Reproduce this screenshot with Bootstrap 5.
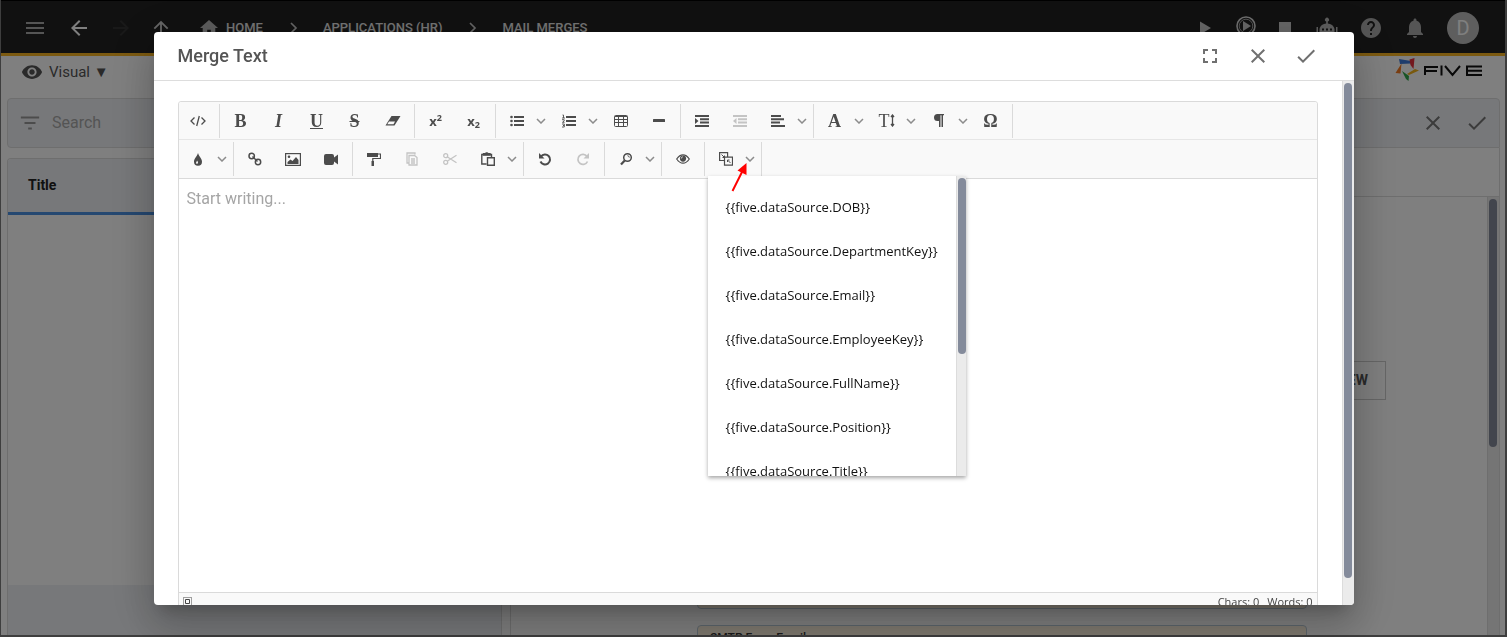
<!DOCTYPE html>
<html lang="en">
<head>
<meta charset="utf-8">
<meta name="viewport" content="width=device-width, initial-scale=1">
<title>Merge Text</title>
<link href="https://cdn.jsdelivr.net/npm/bootstrap@5.3.0/dist/css/bootstrap.min.css" rel="stylesheet">
<style>
  body { font-family: Roboto, "Liberation Sans", sans-serif; background: #808080; overflow: hidden; }
  svg { display: block; flex: none; }
  .plain-btn { background: none; border: 0; padding: 0; color: inherit; display: flex; align-items: center; justify-content: center; }

  /* application behind the dialog */
  .app-frame { height: 100vh; background: #fff; border: solid #7c7c7c; border-width: 0 2px 2px 1px; overflow: hidden; }
  .top-nav { height: 56px; flex: none; background: #222; border-top: 1px solid #000; border-bottom: 3px solid #f8b422; color: #fff; padding: 2px 26px 0 12px; }
  .top-nav .plain-btn { width: 44px; height: 44px; }
  .top-nav .plain-btn.tight { width: 40px; }
  .top-nav .dim { color: #aaa; }
  .top-nav .off { color: #333; }
  .crumbs { font-size: 13px; font-weight: 500; margin-left: 19px; }
  .crumbs a { color: #e8e8e8; text-decoration: none; }
  .crumbs svg { margin: 0 24px; }
  .avatar { width: 32px; height: 32px; border-radius: 50%; background: #bdbdbd; font-size: 20px; line-height: 32px; margin-left: 10px; }
  .view-bar { height: 42px; flex: none; padding: 0 21px 0 20px; color: #555; font-size: 15px; }
  .view-bar .plain-btn { height: 32px; gap: 6px; }
  .work-area { padding: 0 5px 0 6px; gap: 8px; }
  .list-side { width: 495px; }
  .soft { background: #eff1f5; }
  .lined { border: 1px solid #dcdcdc; }
  .search-box { height: 50px; flex: none; border-radius: 4px; padding: 0 11px; gap: 9px; color: #999; }
  .search-box input { border: 0; background: none; color: #999; font-size: 16px; width: 100%; }
  .search-box input::placeholder { color: #a9a9a9; }
  .records { margin-top: 10px; border-radius: 4px 4px 0 0; border-bottom: 0; }
  .records-head { height: 56px; border-bottom: 3px solid #4a90e2; padding: 0 20px; font-size: 14px; font-weight: 700; color: #222; }
  .records-foot { height: 50px; }
  .form-head { height: 50px; flex: none; border-radius: 4px 4px 0 0; color: #777; }
  .form-head .plain-btn { width: 44px; height: 44px; }
  .form-tabs { height: 49px; flex: none; border-top: 0; }
  .form-scroll { border: solid #dcdcdc; border-width: 0 1px; }
  .form-fields { padding: 164px 0 0 6px; overflow: hidden; }
  .preview-btn { height: 39px; flex: none; border: 1px solid #ccc; border-radius: 0; background: none; font-size: 14px; font-weight: 700; color: #555; padding: 0 17px; margin-right: 101px; }
  .form-field { width: 610px; max-width: 90%; margin: 0 auto 16px; border: 1px solid #b9cbd9; border-radius: 4px; background: #fff3e0; padding: 3px 12px; font-size: 12px; font-weight: 500; color: #333; flex: none; }
  .field-tall { height: 209px; }
  .field-short { height: 60px; }

  .scroll-track { width: 12px; flex: none; background: #ebebeb; border-left: 1px solid #dcdcdc; padding: 2px 1px; }
  .scroll-thumb { width: 8px; border-radius: 4px; background: #848b9b; }
  .thumb-page { height: 248px; }
  .thumb-dialog { height: calc(100vh - 142px); }
  .thumb-menu { height: 176px; }

  /* dialog */
  .merge-modal { --bs-modal-margin: 32px; --bs-modal-width: 1200px; --bs-modal-border-width: 0; --bs-modal-border-radius: 4px; --bs-modal-inner-border-radius: 4px; }
  .merge-modal .modal-content { height: 100%; box-shadow: 0 11px 15px -7px rgba(0,0,0,.2), 0 24px 38px 3px rgba(0,0,0,.14), 0 9px 46px 8px rgba(0,0,0,.12); }
  .merge-modal .modal-header { height: 49px; padding: 0 24px; border-bottom: 1px solid #ddd; color: #707070; }
  .merge-modal .modal-title { font-size: 18px; font-weight: 500; color: #555; line-height: 24px; }
  .merge-modal .modal-header .plain-btn { width: 48px; height: 48px; }
  .merge-modal .modal-body { padding: 0; overflow: hidden; }
  .editor-wrap { padding: 20px 24px 0; }

  .editor { border: 1px solid #dadada; border-radius: 3px 3px 0 0; }
  .editor-tools { background: #f9f9f9; border-bottom: 1px solid #dadada; border-radius: 3px 3px 0 0; color: #4c4c4c; }
  .tool-row { height: 38px; }
  .tool-row:first-child { border-bottom: 1px solid #e6e6e6; }
  .tool-group { height: 34px; padding: 0 2px; border-right: 1px solid #dadada; }
  .tool-group:first-child { padding-left: 0; }
  .tool-group .plain-btn { width: 38px; height: 34px; }
  .tool-group .plain-btn.more { width: 14px; padding-right: 4px; color: #8c8c8c; }
  .tool-group .plain-btn:disabled { opacity: .3; }
  .serif { font: bold 18px/20px "Liberation Serif", serif; }
  .script { font: bold 13px/16px "Open Sans", sans-serif; }
  .script sup, .script sub { font-size: 9px; }
  .editor-text { display: block; width: 100%; border: 0; resize: none; padding: 8px; font-size: 16px; line-height: 24px; height: calc(100vh - 224px); outline: 0; }
  .editor-text::placeholder { color: #a5a5a5; }
  .editor-status { height: 25px; background: #f9f9f9; border-top: 1px solid #dadada; padding: 0 4px; gap: 8px; font: 11px/18px "Open Sans", sans-serif; color: #444; }

  .field-menu { position: absolute; left: 3px; top: 34px; width: 258px; height: 300px; background: #fff; z-index: 5; box-shadow: 0 2px 4px rgba(0,0,0,.35); overflow: hidden; }
  .field-menu ul { padding-top: 9px; }
  .field-menu a { display: block; padding: 0 18px; font: 13px/44px "Open Sans", sans-serif; color: #111; text-decoration: none; white-space: nowrap; }
  .pointer { position: absolute; left: 26px; top: 21px; z-index: 6; }
</style>
</head>
<body>
<svg width="0" height="0" class="position-absolute" aria-hidden="true">
  <symbol id="chev" viewBox="0 0 10 6"><path d="M1 1l4 4 4-4" fill="none" stroke="currentColor" stroke-width="1.5"/></symbol>
  <symbol id="x" viewBox="0 0 24 24"><path d="M19 6.41L17.59 5 12 10.59 6.41 5 5 6.41 10.59 12 5 17.59 6.41 19 12 13.41 17.59 19 19 17.59 13.41 12z" fill="currentColor"/></symbol>
  <symbol id="check" viewBox="0 0 24 24"><path d="M9 16.17L4.83 12l-1.42 1.41L9 19 21 7l-1.41-1.41z" fill="currentColor"/></symbol>
  <symbol id="eye" viewBox="0 0 24 24"><path d="M12 4.5C7 4.5 2.73 7.61 1 12c1.73 4.39 6 7.5 11 7.5s9.27-3.11 11-7.5c-1.73-4.39-6-7.5-11-7.5zM12 17c-2.76 0-5-2.24-5-5s2.24-5 5-5 5 2.24 5 5-2.24 5-5 5zm0-8c-1.66 0-3 1.34-3 3s1.34 3 3 3 3-1.34 3-3-1.34-3-3-3z" fill="currentColor"/></symbol>
</svg>

<div class="app-frame d-flex flex-column">
  <header class="top-nav d-flex align-items-center">
    <button class="plain-btn dim" aria-label="Menu"><svg width="24" height="24" viewBox="0 0 24 24" fill="currentColor"><path d="M3 18h18v-2H3v2zm0-5h18v-2H3v2zm0-7v2h18V6H3z"/></svg></button>
    <button class="plain-btn" aria-label="Back"><svg width="24" height="24" viewBox="0 0 24 24" fill="currentColor"><path d="M20 11H7.83l5.59-5.59L12 4l-8 8 8 8 1.41-1.41L7.83 13H20v-2z"/></svg></button>
    <button class="plain-btn tight off" aria-label="Forward"><svg width="24" height="24" viewBox="0 0 24 24" fill="currentColor"><path d="M12 4l-1.41 1.41L16.17 11H4v2h12.17l-5.58 5.59L12 20l8-8z"/></svg></button>
    <button class="plain-btn tight" aria-label="Up"><svg width="22" height="22" viewBox="0 0 24 24" fill="#ccc"><path d="M4 12l1.41 1.41L11 7.83V20h2V7.83l5.58 5.59L20 12l-8-8-8 8z"/></svg></button>
    <nav class="crumbs d-flex align-items-center" aria-label="Breadcrumb">
      <a href="#" class="d-flex align-items-center"><svg class="m-0 me-2" width="18" height="20" viewBox="2 2 20 20" fill="#bbb"><path d="M10 20v-6h4v6h5v-8h3L12 3 2 12h3v8z"/></svg>HOME</a>
      <svg width="12" height="12" viewBox="0 0 12 12"><path d="M4 1l5 5-5 5" fill="none" stroke="#ccc" stroke-width="1.7"/></svg>
      <a href="#">APPLICATIONS (HR)</a>
      <svg width="12" height="12" viewBox="0 0 12 12"><path d="M4 1l5 5-5 5" fill="none" stroke="#ccc" stroke-width="1.7"/></svg>
      <a href="#">MAIL MERGES</a>
    </nav>
    <div class="ms-auto d-flex align-items-center">
      <button class="plain-btn tight" aria-label="Run"><svg width="24" height="24" viewBox="0 0 24 24" fill="#ccc"><path d="M7 5.500v13l11-6.500z"/></svg></button>
      <button class="plain-btn tight" aria-label="Preview"><svg width="24" height="28" viewBox="0 0 24 28"><circle cx="13" cy="12" r="9" fill="none" stroke="#ddd" stroke-width="1.600"/><circle cx="13" cy="12" r="6.800" fill="none" stroke="#aaa"/><path d="M10 7v10l8-5z" fill="#ccc"/></svg></button>
      <button class="plain-btn tight" aria-label="Stop"><svg width="24" height="24" viewBox="0 0 24 24"><path d="M6 6h12v12H6z" fill="#ccc"/></svg></button>
      <button class="plain-btn" aria-label="Assistant"><svg width="24" height="24" viewBox="0 0 24 24"><path d="M11.200 5.500a2 2 0 1 1 1.600 0V7.500c3 .3 6 2 6.700 5.500v7h-15v-7c.7-3.500 3.700-5.200 6.700-5.500zM1.500 11h1.500v6H1.500zM21 11h1.500v6H21z" fill="#bbb"/><path d="M7 12.500h2v2H7zM11 12.500h2v2h-2zM15 12.500h2v2h-2z" fill="#222"/></svg></button>
      <button class="plain-btn" aria-label="Help"><svg width="24" height="24" viewBox="0 0 24 24" fill="#aaa"><path d="M12 2C6.480 2 2 6.480 2 12s4.480 10 10 10 10-4.480 10-10S17.520 2 12 2zm1 17h-2v-2h2v2zm2.070-7.750l-.9.920C13.450 12.900 13 13.500 13 15h-2v-.5c0-1.100.45-2.100 1.170-2.830l1.240-1.260c.37-.36.59-.86.59-1.410 0-1.100-.9-2-2-2s-2 .9-2 2H8c0-2.210 1.790-4 4-4s4 1.790 4 4c0 .88-.36 1.680-.93 2.250z"/></svg></button>
      <button class="plain-btn" aria-label="Notifications"><svg width="24" height="24" viewBox="0 0 24 24" fill="#aaa"><path d="M12 22c1.100 0 2-.9 2-2h-4c0 1.100.89 2 2 2zm6-6v-5c0-3.070-1.640-5.640-4.500-6.320V4c0-.83-.67-1.500-1.500-1.500s-1.500.67-1.500 1.500v.68C7.630 5.360 6 7.920 6 11v5l-2 2v1h16v-1l-2-2z"/></svg></button>
      <div class="avatar text-center">D</div>
    </div>
  </header>

  <div class="view-bar d-flex align-items-start">
    <button class="plain-btn"><svg width="22" height="22"><use href="#eye"/></svg><span>Visual ▼</span></button>
    <svg class="ms-5 mt-1" width="20" height="24" viewBox="0 0 20 24" fill="#444"><circle cx="2" cy="8" r="4"/><circle cx="2" cy="16" r="4"/></svg>
    <svg class="ms-auto" width="90" height="28" viewBox="0 0 90 28">
      <path d="M5 3l3 .500 9 1.500v2.500l-11 .500z" fill="#3b78d8"/><path d="M15.500 3.500l5-1.500-1 11-3-4z" fill="#e8333e"/><path d="M25 14.500l-10 4.500-2-1 8-5z" fill="#f3b21b"/><path d="M8 15l7 5-.5 5-2.500-2z" fill="#2fa84a"/><path d="M7.500 7.500l-1 10-5-.500z" fill="#f27a22"/>
      <g fill="none" stroke="#111" stroke-width="2"><path d="M31 19v-8h13M31 15h12M47.500 9.500v10M51 10l7.500 9 7.500-9M88 10.500H73v8.500h15M73 14.700h15"/></g>
    </svg>
  </div>

  <main class="work-area d-flex flex-fill overflow-hidden">
    <section class="list-side d-flex flex-column">
      <label class="search-box soft lined d-flex align-items-center">
        <svg width="22" height="22" viewBox="0 0 24 24" fill="currentColor"><path d="M10 19h4v-2h-4v2zM2 5v2h20V5H2zm4 8h12v-2H6v2z"/></svg>
        <input type="search" placeholder="Search" aria-label="Search">
      </label>
      <div class="records lined d-flex flex-column flex-fill overflow-hidden">
        <div class="records-head soft d-flex align-items-center">Title</div>
        <div class="flex-fill"></div>
        <div class="records-foot soft"></div>
      </div>
    </section>
    <section class="d-flex flex-column flex-fill">
      <div class="form-head soft lined d-flex align-items-center justify-content-end">
        <button class="plain-btn" aria-label="Cancel"><svg width="24" height="24"><use href="#x"/></svg></button>
        <button class="plain-btn" aria-label="Save"><svg width="24" height="24"><use href="#check"/></svg></button>
      </div>
      <div class="form-tabs lined"></div>
      <div class="form-scroll d-flex flex-fill overflow-hidden">
        <div class="form-fields d-flex flex-column flex-fill">
          <button class="preview-btn align-self-end">PREVIEW</button>
          <div class="form-field field-tall"></div>
          <div class="form-field field-short">SMTP From Email</div>
        </div>
        <div class="scroll-track"><div class="scroll-thumb thumb-page"></div></div>
      </div>
    </section>
  </main>
</div>

<div class="modal-backdrop show"></div>
<div class="modal merge-modal show d-block" role="dialog" aria-labelledby="mergeTitle" aria-modal="true">
  <div class="modal-dialog modal-dialog-scrollable">
    <div class="modal-content">
      <div class="modal-header">
        <h1 class="modal-title" id="mergeTitle">Merge Text</h1>
        <div class="d-flex">
          <button class="plain-btn" aria-label="Full screen"><svg width="24" height="24" viewBox="0 0 24 24" fill="none" stroke="currentColor" stroke-width="2"><path d="M6 10V6h4M14 6h4v4M18 14v4h-4M10 18H6v-4"/></svg></button>
          <button class="plain-btn" aria-label="Close"><svg width="24" height="24"><use href="#x"/></svg></button>
          <button class="plain-btn" aria-label="Confirm"><svg width="24" height="24"><use href="#check"/></svg></button>
        </div>
      </div>
      <div class="modal-body d-flex">
        <div class="editor-wrap flex-fill">
          <div class="editor">
            <div class="editor-tools" role="toolbar" aria-label="Formatting">
              <div class="tool-row d-flex align-items-center">
                <div class="tool-group d-flex">
                  <button class="plain-btn" aria-label="Source"><svg width="16" height="16" viewBox="0 0 16 16" fill="none" stroke="currentColor" stroke-width="1.300"><path d="M4.500 4.500L1 8l3.500 3.500M11.500 4.500L15 8l-3.500 3.500M9.300 3L6.700 13"/></svg></button>
                </div>
                <div class="tool-group d-flex">
                  <button class="plain-btn serif" aria-label="Bold">B</button>
                  <button class="plain-btn serif fst-italic" aria-label="Italic">I</button>
                  <button class="plain-btn serif text-decoration-underline" aria-label="Underline">U</button>
                  <button class="plain-btn serif text-decoration-line-through" aria-label="Strikethrough">S</button>
                  <button class="plain-btn" aria-label="Eraser"><svg width="16" height="16" viewBox="0 0 16 16"><path d="M6.500 3H15.500L9.500 12.500H.5z" fill="currentColor"/><path d="M4 8.500h6L8.500 11.300H2.300z" fill="#f9f9f9"/></svg></button>
                </div>
                <div class="tool-group d-flex">
                  <button class="plain-btn script" aria-label="Superscript"><span>x<sup>2</sup></span></button>
                  <button class="plain-btn script" aria-label="Subscript"><span>x<sub>2</sub></span></button>
                </div>
                <div class="tool-group d-flex">
                  <button class="plain-btn" aria-label="Bulleted list"><svg width="14" height="14" viewBox="0 0 14 14" fill="currentColor"><path d="M4 2h10v2H4zM4 6h10v2H4zM4 10h10v2H4z"/><circle cx="1.500" cy="3" r="1.300"/><circle cx="1.500" cy="7" r="1.300"/><circle cx="1.500" cy="11" r="1.300"/></svg></button>
                  <button class="plain-btn more" aria-label="Bulleted list styles"><svg width="10" height="6"><use href="#chev"/></svg></button>
                  <button class="plain-btn" aria-label="Numbered list"><svg width="14" height="14" viewBox="0 0 14 14"><path d="M4 2h10v2H4zM4 6h10v2H4zM4 10h10v2H4z" fill="currentColor"/><path d="M.5 1h1v3M0 4h3M0 5.700h2.200v1.200L.5 8.300h2M0 10h2.300v1.500H1h1.300V13H0" fill="none" stroke="currentColor" stroke-width=".9"/></svg></button>
                  <button class="plain-btn more" aria-label="Numbered list styles"><svg width="10" height="6"><use href="#chev"/></svg></button>
                  <button class="plain-btn" aria-label="Table"><svg width="14" height="12" viewBox="0 0 14 12" fill="none" stroke="currentColor"><rect x=".5" y=".5" width="13" height="11" rx="1"/><path d="M1 1.500h12M1 4.500h12M1 7.500h12M4.500 1v10M9.500 1v10"/></svg></button>
                  <button class="plain-btn" aria-label="Horizontal line"><svg width="12" height="3" viewBox="0 0 12 3"><rect width="12" height="3" rx=".5" fill="currentColor"/></svg></button>
                </div>
                <div class="tool-group d-flex">
                  <button class="plain-btn" aria-label="Increase indent"><svg width="14" height="12" viewBox="0 0 14 12" fill="currentColor"><path d="M0 0h14v2H0zM5 3.300h9v2H5zM5 6.600h9v2H5zM0 10h14v2H0zM0 3l3.500 3L0 9z"/></svg></button>
                  <button class="plain-btn" disabled aria-label="Decrease indent"><svg width="14" height="12" viewBox="0 0 14 12" fill="currentColor"><path d="M0 0h14v2H0zM5 3.300h9v2H5zM5 6.600h9v2H5zM0 10h14v2H0zM3.500 3L0 6l3.500 3z"/></svg></button>
                  <button class="plain-btn" aria-label="Align"><svg width="14" height="12" viewBox="0 0 14 12" fill="currentColor"><path d="M0 0h10v2H0zM0 3.300h13v2H0zM0 6.600h9v2H0zM0 10h14v2H0z"/></svg></button>
                  <button class="plain-btn more" aria-label="Alignments"><svg width="10" height="6"><use href="#chev"/></svg></button>
                </div>
                <div class="tool-group d-flex">
                  <button class="plain-btn serif" aria-label="Font">A</button>
                  <button class="plain-btn more" aria-label="Fonts"><svg width="10" height="6"><use href="#chev"/></svg></button>
                  <button class="plain-btn serif fw-normal" aria-label="Font size">T<svg width="5" height="13" viewBox="0 0 5 13"><path d="M2.500 1v11M1 3l1.500-2L4 3M1 10l1.500 2L4 10" fill="none" stroke="currentColor" stroke-width="1.300"/></svg></button>
                  <button class="plain-btn more" aria-label="Font sizes"><svg width="10" height="6"><use href="#chev"/></svg></button>
                  <button class="plain-btn" aria-label="Paragraph format"><svg width="10" height="13" viewBox="0 0 10 13" fill="currentColor"><path d="M3.500 0H10v1.200H9V13H7.500V1.200h-1V13H5V7H3.500a3.500 3.500 0 0 1 0-7z"/></svg></button>
                  <button class="plain-btn more" aria-label="Formats"><svg width="10" height="6"><use href="#chev"/></svg></button>
                  <button class="plain-btn serif" aria-label="Symbols">Ω</button>
                </div>
              </div>
              <div class="tool-row d-flex align-items-center">
                <div class="tool-group d-flex">
                  <button class="plain-btn" aria-label="Colour"><svg width="10" height="13" viewBox="0 0 10 13"><path d="M5 0C6 3.500 9 5.500 9 8.800a4 4 0 0 1-8 0C1 5.500 4 3.500 5 0z" fill="currentColor"/><path d="M4 7.500c0 1-1.200 1.500-.9 2.700.5.900 1.900.6 1.900-.7 0-.8-.5-1.200-1-2z" fill="#f9f9f9"/></svg></button>
                  <button class="plain-btn more" aria-label="Colours"><svg width="10" height="6"><use href="#chev"/></svg></button>
                </div>
                <div class="tool-group d-flex">
                  <button class="plain-btn" aria-label="Link"><svg width="14" height="14" viewBox="0 0 14 14" fill="none" stroke="currentColor" stroke-width="1.500"><circle cx="3.700" cy="4" r="2.700"/><circle cx="10" cy="10" r="2.700"/><path d="M4.500 4.500l5 5"/></svg></button>
                  <button class="plain-btn" aria-label="Image"><svg width="16" height="13" viewBox="0 0 16 13"><rect x=".6" y=".6" width="14.800" height="11.800" fill="none" stroke="currentColor" stroke-width="1.200"/><path d="M2.500 11V9l3-2.500 2 1.500 3.500-4 2.500 3v4z" fill="currentColor"/><circle cx="4" cy="3.700" r="1.300" fill="currentColor"/></svg></button>
                  <button class="plain-btn" aria-label="Video"><svg width="14" height="11" viewBox="0 0 14 11" fill="currentColor"><path d="M2 0h6q2 0 2 2v1.500L14 .5v10l-4-3V9q0 2-2 2H2q-2 0-2-2V2q0-2 2-2z"/></svg></button>
                </div>
                <div class="tool-group d-flex">
                  <button class="plain-btn" aria-label="Copy format"><svg width="14" height="14" viewBox="0 0 14 14"><path d="M0 1h11v4H0zM4.500 9H7v5H4.500z" fill="currentColor"/><path d="M11 2h2.500v4.500H5.800V10" fill="none" stroke="currentColor" stroke-width="1.200"/></svg></button>
                  <button class="plain-btn" disabled aria-label="Copy"><svg width="12" height="14" viewBox="0 0 12 14" fill="none" stroke="currentColor" stroke-width="1.300"><path d="M3 3.500h5.500l2.500 2V13H3zM9 2.500V1H1v10h2M5 7h4M5 9h4M5 11h4"/></svg></button>
                  <button class="plain-btn" disabled aria-label="Cut"><svg width="14" height="12" viewBox="0 0 14 12" fill="none" stroke="currentColor" stroke-width="1.300"><circle cx="2.700" cy="2.700" r="2"/><circle cx="2.700" cy="9.300" r="2"/><path d="M4.500 4L13.500 9.800M4.500 8l9-5.800"/></svg></button>
                  <button class="plain-btn" aria-label="Paste"><svg width="14" height="14" viewBox="0 0 14 14" fill="none" stroke="currentColor" stroke-width="1.400"><path d="M5.500 12H.8V2.500h9.700V5M6.500 5.800h6.800v7.500H6.500z"/><path d="M2.500 3V1.800h2a1.300 1.300 0 0 1 2.500 0h2V3z" fill="currentColor"/></svg></button>
                  <button class="plain-btn more" aria-label="Paste options"><svg width="10" height="6"><use href="#chev"/></svg></button>
                </div>
                <div class="tool-group d-flex">
                  <button class="plain-btn" aria-label="Undo"><svg width="14" height="14" viewBox="0 0 14 14"><path d="M3 4.500A5 5 0 1 1 2.500 9.500" fill="none" stroke="currentColor" stroke-width="2"/><path d="M1 1v5.500h5.500z" fill="currentColor"/></svg></button>
                  <button class="plain-btn" disabled aria-label="Redo"><svg width="14" height="14" viewBox="0 0 14 14"><path d="M11 4.500A5 5 0 1 0 11.500 9.500" fill="none" stroke="currentColor" stroke-width="1.700"/><path d="M13 1v5.500H7.500z" fill="currentColor"/></svg></button>
                </div>
                <div class="tool-group d-flex">
                  <button class="plain-btn" aria-label="Find"><svg width="14" height="14" viewBox="0 0 14 14" fill="none" stroke="currentColor"><circle cx="8.500" cy="5.500" r="3.800" stroke-width="1.500"/><path d="M5.700 8.500L2 12.500" stroke-width="2.200"/><path d="M8.500 3.700a2 2 0 0 1 1.800 1.800"/></svg></button>
                  <button class="plain-btn more" aria-label="Find options"><svg width="10" height="6"><use href="#chev"/></svg></button>
                </div>
                <div class="tool-group d-flex">
                  <button class="plain-btn" aria-label="Preview"><svg width="14" height="10" viewBox="0 0 14 10"><path d="M.7 5Q3.500.8 7 .8T13.300 5Q10.500 9.200 7 9.200T.7 5z" fill="none" stroke="currentColor" stroke-width="1.200"/><circle cx="7" cy="4.600" r="3.100" fill="currentColor"/><path d="M5.300 4.500q0-1.500 1.500-1.700" fill="none" stroke="#f9f9f9" stroke-width=".8"/></svg></button>
                </div>
                <div class="tool-group d-flex position-relative">
                  <button class="plain-btn" aria-label="Merge field"><svg width="14" height="14" viewBox="0 0 14 14" fill="none" stroke="currentColor" stroke-width="1.200"><path d="M5 8.500H.6V.6h8V4.500M5.500 5.200h8v8h-8z"/><path d="M2.500 2.500l2.500 2.500M5.500 3.500v2H3.500M11.500 11L9 8.500M8.500 10V8h2" stroke-width="1"/></svg></button>
                  <button class="plain-btn more" aria-label="Merge fields" aria-expanded="true"><svg width="10" height="6"><use href="#chev"/></svg></button>
                  <div class="field-menu d-flex">
                    <ul class="list-unstyled mb-0 flex-fill">
                      <li><a href="#">{{five.dataSource.DOB}}</a></li>
                      <li><a href="#">{{five.dataSource.DepartmentKey}}</a></li>
                      <li><a href="#">{{five.dataSource.Email}}</a></li>
                      <li><a href="#">{{five.dataSource.EmployeeKey}}</a></li>
                      <li><a href="#">{{five.dataSource.FullName}}</a></li>
                      <li><a href="#">{{five.dataSource.Position}}</a></li>
                      <li><a href="#">{{five.dataSource.Title}}</a></li>
                    </ul>
                    <div class="scroll-track"><div class="scroll-thumb thumb-menu"></div></div>
                  </div>
                  <svg class="pointer" width="18" height="30" viewBox="0 0 18 30"><path d="M1.500 28L11 9" stroke="#f00" stroke-width="2"/><path d="M15.500 0v12L6.500 7.500z" fill="#f00"/></svg>
                </div>
              </div>
            </div>
            <textarea class="editor-text" placeholder="Start writing..." aria-label="Merge text"></textarea>
            <div class="editor-status d-flex">
              <svg class="mt-1" width="9" height="9" viewBox="0 0 9 9" fill="none" stroke="#444"><path d="M.5.500h8v8h-8z" stroke-dasharray="1 1"/><path d="M2.500 2.500h4v4h-4z"/></svg>
              <span class="ms-auto">Chars: 0</span><span>Words: 0</span>
            </div>
          </div>
        </div>
        <div class="scroll-track"><div class="scroll-thumb thumb-dialog"></div></div>
      </div>
    </div>
  </div>
</div>
<script src="https://cdn.jsdelivr.net/npm/bootstrap@5.3.0/dist/js/bootstrap.bundle.min.js"></script>
</body>
</html>
